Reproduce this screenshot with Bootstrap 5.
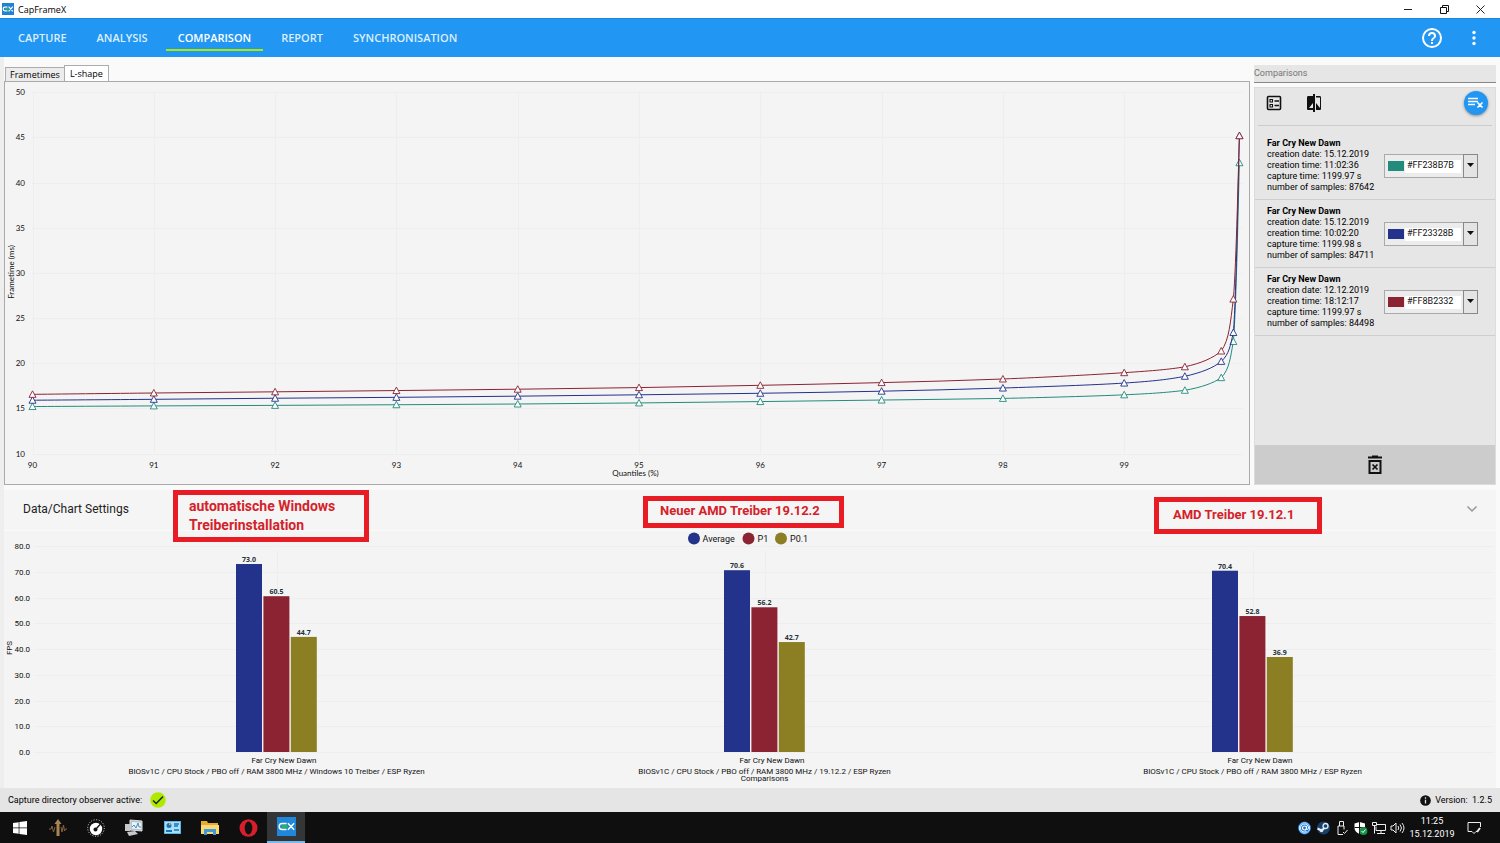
<!DOCTYPE html>
<html lang="en">
<head>
<meta charset="utf-8">
<meta name="viewport" content="width=device-width, initial-scale=1">
<title>CapFrameX</title>
<link href="https://cdn.jsdelivr.net/npm/bootstrap@5.3.0/dist/css/bootstrap.min.css" rel="stylesheet">
<style>
  body { font-family: Roboto, "Open Sans", sans-serif; font-size: 9px; line-height: 11px; color: #000; background: #fafafa; }
  button { border: 0; background: transparent; padding: 0; color: inherit; }
  svg { display: block; }
  .segoe { font-family: "Open Sans", "Noto Sans", sans-serif; }
  .titlebar { height: 18px; background: #fff; padding: 0 2px; }
  .titlebar .win-btn { width: 36px; height: 17px; }
  .appbar { height: 39px; background: #2196f3; border-top: 1px solid #1e88dd; color: #fff; }
  .menu { gap: 6px; padding-left: 6px; }
  .menu a { font-size: 11px; line-height: 16px; font-weight: 600; color: #dceffe; padding: 4px 12px 3px; border-bottom: 2px solid transparent; text-decoration: none; }
  .menu a.active { color: #fff; border-color: #aeea00; }
  .workspace { padding: 8px 4px 0; background: linear-gradient(90deg, #eee 4px, #fafafa 4px); }
  .side { width: 242px; flex: none; }
  .page-tabs { padding-left: 1px; }
  .page-tabs button { font-size: 9px; line-height: 11px; border: 1px solid #acacac; border-bottom: 0; background: #ececec; padding: 0 4px 1px; height: 14px; }
  .page-tabs button.active { background: #fff; height: 16px; padding: 0 5px 1px; margin-left: -1px; }
  .plot { border: 1px solid #aaa; background: #f4f4f4; }
  .side-head { height: 18px; color: #757575; background: #e6e6e6; border-bottom: 1px solid #888; }
  .side-body { background: #e6e6e6; border: 1px solid #dcdcdc; margin-top: 4px; }
  .side-tools { height: 38px; margin: 0 3px; padding: 0 4px 7px 8px; border-bottom: 1px solid #ccc; }
  .fab { width: 24px; height: 24px; border-radius: 50%; background: #2196f3; box-shadow: 0 1px 3px #0006; }
  .records { margin-top: 6px; }
  .record { height: 68px; border-bottom: 1px solid #cfcfcf; padding: 0 17px 0 12px; }
  .record strong { font-weight: 700; }
  .picker { width: 94px; height: 24px; }
  .picker select { width: 100%; height: 100%; appearance: none; border: 1px solid #aaa; border-radius: 0; background: linear-gradient(#fff, #fff) 20px 5px / 56px 13px no-repeat #ececec; font-size: 9px; padding: 0 16px 0 22px; color: #111; }
  .swatch { left: 4px; top: 7px; width: 16px; height: 10px; pointer-events: none; }
  .drop { right: 0; top: 0; width: 15px; height: 24px; border: 1px solid #888; background: #e4e4e4; pointer-events: none; }
  .trash { height: 39px; background: #ccc; }
  .settings { height: 40px; margin-top: 5px; background: #f5f5f5; }
  .settings > button { font-size: 12px; line-height: 16px; padding: 0 18px 3px 19px; color: #222; }
  .bars { background: #f4f4f4; margin-top: 1px; }
  .note { border: 5px solid #e81c24; color: #d4222a; font: 700 13px/19px Roboto, sans-serif; }
  .note-a { left: 169px; top: 0; width: 196px; height: 52px; padding: 2px 11px; font-size: 14px; }
  .note-b { left: 639px; top: 6px; width: 201px; height: 32px; padding: 0 12px; }
  .note-c { left: 1150px; top: 7px; width: 168px; height: 37px; padding: 3px 14px; }
  .statusbar { height: 24px; background: #e5e5e5; padding: 0 8px; }
  .taskbar { height: 31px; background: #0f0f10; color: #fff; padding: 0 18px 0 1px; }
  .task { width: 38px; height: 31px; }
  .task.active { background: #333537; border-bottom: 2px solid #76b9ed; }
  .clock { width: 46px; line-height: 13px; }
  .tick-text { font-family: Lato, "Open Sans", sans-serif; font-size: 8px; fill: #111; }
  .category { font-family: Roboto, sans-serif; font-size: 8px; fill: #111; }
  .bar-value { font-family: "Open Sans", sans-serif; font-weight: 700; font-size: 7px; fill: #263238; }
</style>
</head>
<body>
<div class="min-vh-100 d-flex flex-column">

  <header>
    <div class="titlebar segoe d-flex align-items-center">
      <svg class="me-1" width="12" height="12" viewBox="0 0 20 20"><path fill="#1f82d2" d="M0 0h20v20H0z"/><path d="M9 7H5a3 3 0 0 0 0 6h4M11 6l7 8M18 6l-7 8" fill="none" stroke="#fff" stroke-width="2"/><path d="M5 10h6" stroke="#2fb15c" stroke-width="4"/></svg>
      <span>CapFrameX</span>
      <div class="ms-auto d-flex">
        <button class="win-btn" aria-label="Minimize"><svg class="mx-auto" width="9" height="9" viewBox="0 0 9 9"><path d="M0 4.500h8" stroke="#222"/></svg></button>
        <button class="win-btn" aria-label="Restore"><svg class="mx-auto" width="9" height="9" viewBox="0 0 9 9"><path d="M.5 2.500h6v6h-6zM2.500 2.500v-2h6v6h-2" fill="none" stroke="#111"/></svg></button>
        <button class="win-btn" aria-label="Close"><svg class="mx-auto" width="9" height="9" viewBox="0 0 9 9"><path d="M.5.5l8 8M8.500.5l-8 8" stroke="#222"/></svg></button>
      </div>
    </div>
    <div class="appbar d-flex align-items-center">
      <nav class="menu segoe d-flex">
        <a href="#">CAPTURE</a><a href="#">ANALYSIS</a><a href="#" class="active" aria-current="page">COMPARISON</a><a href="#">REPORT</a><a href="#">SYNCHRONISATION</a>
      </nav>
      <div class="ms-auto d-flex align-items-center">
        <button aria-label="Help"><svg width="24" height="24" viewBox="0 0 24 24" fill="#fff"><path d="M11 18h2v-2h-2zM12 2a10 10 0 1 0 0 20 10 10 0 0 0 0-20m0 18a8 8 0 1 1 0-16 8 8 0 0 1 0 16m0-14a4 4 0 0 0-4 4h2a2 2 0 1 1 4 0c0 2-3 1.750-3 5h2c0-2.250 3-2.500 3-5a4 4 0 0 0-4-4"/></svg></button>
        <button class="ms-3 ps-1 pe-2 me-2" aria-label="More"><svg width="20" height="20" viewBox="0 0 20 20" fill="#fff"><circle cx="10" cy="4.500" r="1.700"/><circle cx="10" cy="10" r="1.700"/><circle cx="10" cy="15.500" r="1.700"/></svg></button>
      </div>
    </div>
  </header>

  <main class="workspace flex-grow-1">
    <div class="d-flex gap-1">
      <section class="flex-grow-1" style="min-width:0">
        <div class="page-tabs segoe d-flex align-items-end" role="tablist">
          <button role="tab" aria-selected="false">Frametimes</button>
          <button role="tab" aria-selected="true" class="active">L-shape</button>
        </div>
        <div class="plot"><svg id="lshape" class="w-100" viewBox="5 82 1244 402" role="img" aria-label="L-shape quantiles"></svg></div>
      </section>

      <aside class="side d-flex flex-column">
        <div class="side-head d-flex align-items-center">Comparisons</div>
        <div class="side-body flex-grow-1 d-flex flex-column">
          <div class="side-tools d-flex align-items-center">
            <button aria-label="Details"><svg width="16" height="16" viewBox="0 0 16 16" fill="none" stroke="#111" stroke-width="1.600"><rect x="1.500" y="1.500" width="13" height="13" rx="1"/><path d="M4 4.500h2.500v2.500H4zM4 9.500h2.500v2.500H4z" stroke-width="1.100"/><path d="M8.500 6h4.500M8.500 10.500h4.500" stroke-width="1.400"/></svg></button>
            <button class="ms-4" aria-label="Compare"><svg width="16" height="18" viewBox="0 0 16 18" fill="#111"><path d="M7 2H2.500C1.500 2 1 2.500 1 3.500v11c0 1 .5 1.500 1.500 1.500H7v2h2V0H7zM7 14H3l4-5zM10 2h3.500c1 0 1.500.5 1.500 1.500v11c0 1-.5 1.500-1.500 1.500H10V9l4 5V3.500h-4z"/></svg></button>
            <button class="fab ms-auto" aria-label="Clear list"><svg class="mx-auto" width="16" height="16" viewBox="0 0 16 16" fill="none" stroke="#fff" stroke-width="1.700"><path d="M0 3.500h10M0 6.500h10M0 9.500h7M9.500 7.500l5 5M14.500 7.500l-5 5"/></svg></button>
          </div>
          <div id="records" class="records"></div>
          <button class="trash w-100 mt-auto" aria-label="Delete all"><svg class="mx-auto" width="16" height="20" viewBox="0 0 16 20" fill="none" stroke="#111"><path d="M1 2.500h14M5 1.500h6" stroke-width="2"/><path d="M2.500 6h11v12h-11z" stroke-width="2"/><path d="M5.500 9.500l5 5M10.500 9.500l-5 5" stroke-width="1.700"/></svg></button>
        </div>
      </aside>
    </div>

    <section class="settings position-relative d-flex">
      <button class="w-100 d-flex align-items-center justify-content-between" aria-expanded="false">Data/Chart Settings
        <svg width="12" height="8" viewBox="0 0 12 8" fill="none" stroke="#999" stroke-width="1.500"><path d="M1.500 1.500L6 6l4.500-4.500"/></svg></button>
      <div class="note note-a position-absolute z-1 text-nowrap">automatische Windows<br>Treiberinstallation</div>
      <div class="note note-b position-absolute z-1 text-nowrap">Neuer AMD Treiber 19.12.2</div>
      <div class="note note-c position-absolute z-1 text-nowrap">AMD Treiber 19.12.1</div>
    </section>

    <div class="bars"><svg id="fps" class="w-100" viewBox="4 531 1492 257" role="img" aria-label="FPS comparison"></svg></div>
  </main>

  <footer>
    <div class="statusbar d-flex align-items-center">
      <span>Capture directory observer active:</span>
      <svg class="ms-2" width="16" height="16" viewBox="0 0 16 16"><circle cx="8" cy="8" r="7.800" fill="#aeea00"/><path d="M3 8.500l3.200 3L13 4.500" fill="none" stroke="#222" stroke-width="1.500"/></svg>
      <svg class="ms-auto me-1" width="11" height="11" viewBox="0 0 12 12"><circle cx="6" cy="6" r="5.800" fill="#111"/><path d="M6 2.500v1.500M6 5.200v4" stroke="#e5e5e5" stroke-width="1.400"/></svg>
      <span>Version:&nbsp; 1.2.5</span>
    </div>
    <div class="taskbar d-flex align-items-center">
      <button class="task" aria-label="Start"><svg class="mx-auto" width="14" height="14" viewBox="0 0 14 14" fill="#fff"><path d="M0 2l5.700-.8v5.400H0zM6.400 1.100L14 0v6.600H6.400zM0 7.300h5.700v5.400L0 11.900zM6.400 7.300H14V14l-7.600-1.100z"/></svg></button>
      <button class="task" aria-label="Signal tool"><svg class="mx-auto" width="18" height="18" viewBox="0 0 18 18" fill="none" stroke="#86633a"><path d="M0 10h2l1-3 1.500 6L6 8M12 8l1 5 1.500-7 1 6 1-2H18"/><path d="M9 17V3" stroke="#a98454" stroke-width="3"/><path d="M5.500 5L9 0l3.500 5z" fill="#a98454" stroke="none"/></svg></button>
      <button class="task" aria-label="Gauge"><svg class="mx-auto" width="18" height="18" viewBox="0 0 18 18"><circle cx="9" cy="9" r="8.300" fill="none" stroke="#ddd" stroke-dasharray="1 1.600"/><circle cx="9" cy="10" r="6.200" fill="#fff"/><circle cx="8.500" cy="10.500" r="2" fill="#111"/><path d="M9 10l4.500-5" stroke="#111" stroke-width="1.300"/></svg></button>
      <button class="task" aria-label="Performance monitor"><svg class="mx-auto" width="20" height="18" viewBox="0 0 20 18"><path d="M6 1l12 1v10l-12-1z" fill="#b8c2ca" stroke="#ddd"/><path d="M8 3l9 .7v6.500l-9-.6z" fill="#e9f4fb"/><path d="M8 8l2-2 2 3 2-5 1 4h2" fill="none" stroke="#4a8fb8"/><path d="M1 5h5v7H1zM3 13l8-1 3 3-9 2z" fill="#c5c9cc"/></svg></button>
      <button class="task" aria-label="System panel"><svg class="mx-auto" width="17" height="13" viewBox="0 0 17 13"><path d="M0 0h17v13H0z" fill="#58b7e8"/><path d="M1 1h15v11H1z" fill="#a9e0f8"/><circle cx="5" cy="4.500" r="2.500" fill="#1c70ba"/><path d="M2 9h6v2H2z" fill="#1c70ba"/><path d="M10 3h5M10 5h4M10 9h5" stroke="#1c70ba" stroke-width="1.500"/><path d="M5 4V2l2 2z" fill="#f0b323"/></svg></button>
      <button class="task" aria-label="File Explorer"><svg class="mx-auto" width="18" height="16" viewBox="0 0 18 16"><path d="M0 1h6l1 2h10v11H0z" fill="#e8a92f"/><path d="M0 5h18v9H0z" fill="#fbd976"/><path d="M3 15V9h12v6h-3v-3H6v3z" fill="#419ad6"/></svg></button>
      <button class="task" aria-label="Opera"><svg class="mx-auto" width="19" height="18" viewBox="0 0 19 18"><ellipse cx="9.500" cy="9" rx="9" ry="8.700" fill="#d71e2b"/><ellipse cx="9.500" cy="9" rx="3.800" ry="6.500" fill="#101010"/></svg></button>
      <button class="task active" aria-label="CapFrameX"><svg class="mx-auto" width="19" height="19" viewBox="0 0 20 20"><path fill="#1f87dc" d="M0 0h20v20H0z"/><path d="M5 10h6" stroke="#2fb15c" stroke-width="4"/><path d="M10 6.800H5.500a3.200 3.200 0 0 0 0 6.400H10M11.500 6.500l6.500 7M18 6.500l-6.500 7" fill="none" stroke="#fff" stroke-width="1.500"/></svg></button>

      <div class="ms-auto d-flex align-items-center gap-1">
        <svg width="15" height="14" viewBox="0 0 14 14"><circle cx="7" cy="7" r="6.500" fill="#1475d1"/><circle cx="7" cy="7" r="5.200" fill="none" stroke="#d5ecff"/><circle cx="7" cy="7" r="2" fill="none" stroke="#fff" stroke-width="1.200"/><path d="M9 5v3q1.500 1.500 2-1A4 4 0 1 0 9 10.500" fill="none" stroke="#fff"/></svg>
        <svg width="15" height="14" viewBox="0 0 14 14"><circle cx="7" cy="7" r="6.500" fill="#17416d"/><circle cx="9" cy="5" r="2.500" fill="none" stroke="#e5edf5" stroke-width="1.300"/><path d="M1 7.500l4 2L8 7" stroke="#e5edf5" stroke-width="2" fill="none"/><circle cx="5" cy="9.500" r="1.800" fill="#e5edf5"/></svg>
        <svg width="14" height="14" viewBox="0 0 14 14" fill="none" stroke="#eee"><path d="M4.500 5V.5h4V5M9 8.500V5H3v8.500h5M8 11l1.500 1.500L12.500 9"/></svg>
        <svg width="15" height="14" viewBox="0 0 14 14"><path d="M6 1l5.500 1.500V7c0 3-3 5-5.500 6C3.500 12 1 10 1 7V2.500z" fill="#fff"/><path d="M6 1v12M1 6.500h11" stroke="#111"/><circle cx="10" cy="10" r="3.900" fill="#169348"/><path d="M8 10l1.500 1.500L12 8.500" stroke="#fff" fill="none"/></svg>
        <svg width="14" height="14" viewBox="0 0 14 14" fill="none" stroke="#eee"><path d="M5 3.500h8.500v6H4v-4M9 9.500v3M5 12.500h8M.5 1.500h4v3h-4zM2.500 4.500v8"/></svg>
        <svg width="15" height="14" viewBox="0 0 15 14" fill="none" stroke="#eee"><path d="M1 5h2l3-3v10L3 9H1zM8 5q1.500 2 0 4M10 3.500q3 3.500 0 7M12 2q4 5 0 10"/></svg>
        <div class="clock text-center text-nowrap">11:25<br>15.12.2019</div>
        <button class="ms-2" aria-label="Notifications"><svg width="15" height="15" viewBox="0 0 15 15" fill="none" stroke="#eee"><path d="M10 11.500H9l-2 2-2-2H1v-9h12.500V7"/><path d="M10 12l3-4" stroke-width="2"/></svg></button>
      </div>
    </div>
  </footer>
</div>

<script src="https://cdn.jsdelivr.net/npm/bootstrap@5.3.0/dist/js/bootstrap.bundle.min.js"></script>
<script>
  // Compared captures
  const records = [
    { date: '15.12.2019', time: '11:02:36', length: '1199.97', samples: 87642, color: '238B7B' },
    { date: '15.12.2019', time: '10:02:20', length: '1199.98', samples: 84711, color: '23328B' },
    { date: '12.12.2019', time: '18:12:17', length: '1199.97', samples: 84498, color: '8B2332' }
  ];
  document.getElementById('records').innerHTML = records.map((r, i) => `
    <div class="record d-flex align-items-center justify-content-between">
      <label class="text-nowrap" for="color${i}"><strong>Far Cry New Dawn</strong><br>creation date: ${r.date}<br>creation time: ${r.time}<br>capture time: ${r.length} s<br>number of samples: ${r.samples}</label>
      <div class="picker position-relative flex-shrink-0">
        <select id="color${i}"><option>#FF${r.color}</option></select>
        <span class="swatch position-absolute" style="background:#${r.color}"></span>
        <span class="drop position-absolute d-flex align-items-center justify-content-center"><svg width="7" height="5" viewBox="0 0 7 5"><path d="M0 0h7L3.500 4z" fill="#111"/></svg></span>
      </div>
    </div>`).join('');

  const text = (x, y, s, anchor = 'middle', extra = '', cls = 'tick-text') =>
    `<text class="${cls}" x="${x}" y="${y}" text-anchor="${anchor}" ${extra}>${s}</text>`;
  const line = (x1, y1, x2, y2) => `<path d="M${x1} ${y1}L${x2} ${y2}" stroke="#eee"/>`;

  // L-shape chart: frame time over quantile
  {
    const X = q => 32.5 + (q - 90) * 121.3, Y = ms => 453.5 - (ms - 10) * 9.03;
    const q = [90, 91, 92, 93, 94, 95, 96, 97, 98, 99, 99.5, 99.8, 99.9, 99.95];
    const series = [
      ['#238B7B', [15.2, 15.27, 15.33, 15.4, 15.48, 15.6, 15.75, 15.92, 16.1, 16.5, 17.0, 18.4, 22.4, 42.2]],
      ['#23328B', [15.9, 16.0, 16.12, 16.22, 16.35, 16.5, 16.67, 16.9, 17.25, 17.8, 18.55, 20.2, 23.4, 45.2]],
      ['#8B2332', [16.55, 16.7, 16.83, 16.97, 17.12, 17.3, 17.55, 17.85, 18.25, 18.95, 19.6, 21.35, 27.1, 45.2]]
    ];
    let out = '';
    for (let v = 10; v <= 50; v += 5) out += line(32, Math.round(Y(v)) + .5, 1243, Math.round(Y(v)) + .5) + text(25, Y(v) + 3, v, 'end');
    for (let v = 90; v <= 99; v++) out += line(Math.round(X(v)) + .5, 92, Math.round(X(v)) + .5, 453) + text(X(v), 468, v);
    for (const [color, values] of series) {
      const p = values.map((v, i) => [X(q[i]), Y(v)]);
      let d = `M${p[0]}`;
      for (let i = 0; i < p.length - 1; i++) {
        const a = p[i - 1] || p[i], b = p[i], c = p[i + 1], e = p[i + 2] || c;
        // keep the control points between their two neighbours, so that the curve never overshoots
        const y1 = Math.max(c[1], b[1] + (c[1] - a[1]) / 6);
        const y2 = Math.min(b[1] + (c[1] - b[1]) * .55, Math.max(c[1], c[1] - (e[1] - b[1]) / 6));
        d += `C${b[0] + (c[0] - a[0]) / 6},${y1} ${c[0] - (e[0] - b[0]) / 6},${y2} ${c}`;
      }
      out += `<path d="${d}" fill="none" stroke="${color}"/>`;
      out += p.map(([x, y]) => `<path d="M${x - 3.5} ${y + 3}h7l-3.5 -6.500z" fill="#fff" stroke="${color}" stroke-width=".9"/>`).join('');
    }
    out += text(635.5, 476, 'Quantiles (%)');
    out += text(14, 272, 'Frametime (ms)', 'middle', 'transform="rotate(-90 14 272)"');
    document.getElementById('lshape').innerHTML = out;
  }

  // FPS bar chart
  {
    const Y = v => 752 - v * 2.575, colors = ['#23328B', '#8B2332', '#8B7E23'];
    const groups = [
      [276.5, [73.0, 60.5, 44.7], 'BIOSv1C / CPU Stock / PBO off / RAM 3800 MHz / Windows 10 Treiber / ESP Ryzen'],
      [764.5, [70.6, 56.2, 42.7], 'BIOSv1C / CPU Stock / PBO off / RAM 3800 MHz / 19.12.2 / ESP Ryzen'],
      [1252.5, [70.4, 52.8, 36.9], 'BIOSv1C / CPU Stock / PBO off / RAM 3800 MHz / ESP Ryzen']
    ];
    let out = '';
    for (let v = 0; v <= 80; v += 10) out += line(34, Math.round(Y(v)) + .5, 1494, Math.round(Y(v)) + .5) + text(30, Y(v) + 3, v.toFixed(1), 'end', '', 'category');
    for (const [cx, values, name] of groups) {
      out += line(cx + 1, 550, cx + 1, 752);
      values.forEach((v, i) => {
        const x = cx - 40.5 + i * 27.4;
        out += `<rect x="${x}" y="${Y(v)}" width="26" height="${752 - Y(v)}" fill="${colors[i]}"/>`;
        out += text(x + 13, Y(v) - 2, v.toFixed(1), 'middle', '', 'bar-value');
      });
      out += text(cx + 7.5, 763, 'Far Cry New Dawn', 'middle', '', 'category') + text(cx, 774, name, 'middle', '', 'category');
    }
    out += text(764.5, 781, 'Comparisons', 'middle', '', 'category') + text(12, 648, 'FPS', 'middle', 'transform="rotate(-90 12 648)"', 'category');
    [['Average', 694, 702.5], ['P1', 748.5, 757.5], ['P0.1', 781, 790]].forEach(([s, cx, tx], i) => {
      out += `<circle cx="${cx}" cy="538.5" r="6" fill="${colors[i]}"/><text x="${tx}" y="542" font-size="9" fill="#111">${s}</text>`;
    });
    document.getElementById('fps').innerHTML = out;
  }
</script>
</body>
</html>
